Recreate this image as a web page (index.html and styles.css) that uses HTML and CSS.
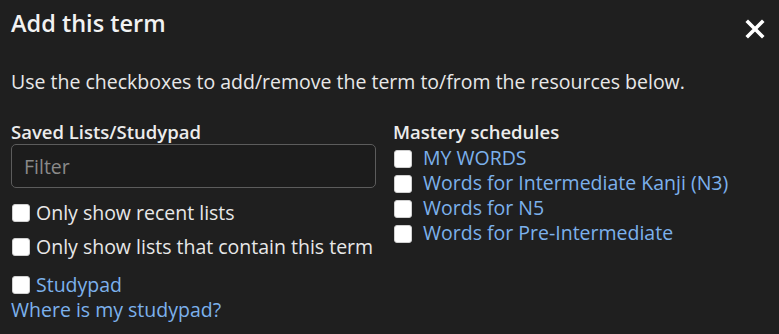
FILE: index.html
```html
<!DOCTYPE html>
<html lang="en">
<head>
  <meta charset="UTF-8" />
  <meta name="viewport" content="width=device-width, initial-scale=1" />
  <title>Add this term</title>
  <link rel="stylesheet" href="styles.css">
</head>
<body>
  <div class="dialog">
    <div class="dialog-header">
      <h2>Add this term</h2>
      <button type="button" class="close-btn" aria-label="Close">
        <svg width="20" height="20" viewBox="0 0 20 20">
          <path d="M3 3 L17 17 M17 3 L3 17" stroke="#fff" stroke-width="3.6" stroke-linecap="square" />
        </svg>
      </button>
    </div>

    <p class="intro">Use the checkboxes to add/remove the term to/from the resources below.</p>

    <div class="columns">
      <!-- saved lists -->
      <div class="col">
        <h3>Saved Lists/Studypad</h3>
        <input type="text" class="filter" placeholder="Filter" />
        <label class="check-row first">
          <input type="checkbox" />
          <span>Only show recent lists</span>
        </label>
        <label class="check-row">
          <input type="checkbox" />
          <span>Only show lists that contain this term</span>
        </label>
        <label class="check-row studypad">
          <input type="checkbox" />
          <a href="#">Studypad</a>
        </label>
        <a href="#" class="help-link">Where is my studypad?</a>
      </div>

      <!-- mastery schedules -->
      <div class="col">
        <h3>Mastery schedules</h3>
        <ul class="schedules">
          <li><input type="checkbox" /><a href="#">MY WORDS</a></li>
          <li><input type="checkbox" /><a href="#">Words for Intermediate Kanji (N3)</a></li>
          <li><input type="checkbox" /><a href="#">Words for N5</a></li>
          <li><input type="checkbox" /><a href="#">Words for Pre-Intermediate</a></li>
        </ul>
      </div>
    </div>
  </div>
</body>
</html>
```

FILE: styles.css
```css
* {
  margin: 0;
  padding: 0;
  box-sizing: border-box;
  font-family: 'Open Sans', 'Noto Sans', sans-serif;
}

body {
  background: #1f1f1f;
  color: #e8e8e8;
  font-size: 19.5px;
  line-height: 25px;
}

.dialog {
  padding: 8px 11px 0 11px;
}

.dialog-header {
  display: flex;
  justify-content: space-between;
  align-items: flex-start;
}

h2 {
  font-size: 23.5px;
  line-height: 30px;
  font-weight: 600;
  color: #f2f2f2;
}

.close-btn {
  background: none;
  border: none;
  cursor: pointer;
  margin-top: 11px;
  margin-right: 3px;
  width: 20px;
  height: 20px;
}

.close-btn svg {
  display: block;
}

.intro {
  margin-top: 30px;
}

.columns {
  display: grid;
  grid-template-columns: 366px 1fr;
  gap: 16px;
  margin-top: 25px;
}

h3 {
  font-size: 18.5px;
  font-weight: 600;
  color: #ececec;
}

a {
  color: #7cb1ec;
  text-decoration: none;
}

.filter {
  display: block;
  width: 365px;
  height: 44px;
  padding: 0 12px;
  background: #1c1c1c;
  border: 1px solid #5c5c5c;
  border-radius: 5px;
  color: #e6e6e6;
  font-size: 19.5px;
}

.filter::placeholder {
  color: #8a8a8a;
}

input[type="checkbox"] {
  appearance: none;
  -webkit-appearance: none;
  width: 18px;
  height: 18px;
  background: #fff;
  border: 1px solid #d0d0d0;
  border-radius: 3px;
  flex-shrink: 0;
  cursor: pointer;
}

.check-row {
  display: flex;
  align-items: center;
  gap: 6px;
  padding-left: 1px;
  margin-top: 9px;
  cursor: pointer;
}

.check-row.first {
  margin-top: 12px;
}

.check-row.studypad {
  margin-top: 13px;
}

.help-link {
  display: block;
}

.schedules {
  list-style: none;
  margin-top: 1px;
}

.schedules li {
  display: flex;
  align-items: center;
  gap: 11px;
  padding-left: 1px;
}

.schedules li input {
  margin-top: 3px;
}
```
